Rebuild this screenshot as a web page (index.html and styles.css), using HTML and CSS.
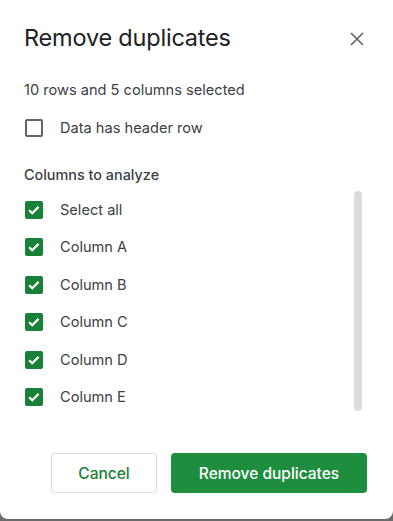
FILE: index.html
```html
<!DOCTYPE html>
<html lang="en">
<head>
  <meta charset="UTF-8" />
  <meta name="viewport" content="width=device-width, initial-scale=1.0"/>
  <title>Remove duplicates</title>
  <link rel="stylesheet" href="styles.css">
</head>
<body>

  <div class="dialog">
    <!-- HEADER -->
    <div class="dialog-head">
      <h1>Remove duplicates</h1>
      <button class="close-btn" aria-label="Close">
        <svg width="24" height="24" viewBox="0 0 24 24">
          <path d="M6 6L18 18M18 6L6 18" stroke="#5f6368" stroke-width="1.6" fill="none"/>
        </svg>
      </button>
    </div>

    <p class="summary">10 rows and 5 columns selected</p>

    <label class="row header-row">
      <span class="box"></span>
      <span>Data has header row</span>
    </label>

    <h2>Columns to analyze</h2>

    <div class="columns">
      <div class="column-list">
        <label class="row"><span class="box checked"></span><span>Select all</span></label>
        <label class="row"><span class="box checked"></span><span>Column A</span></label>
        <label class="row"><span class="box checked"></span><span>Column B</span></label>
        <label class="row"><span class="box checked"></span><span>Column C</span></label>
        <label class="row"><span class="box checked"></span><span>Column D</span></label>
        <label class="row"><span class="box checked"></span><span>Column E</span></label>
      </div>
      <div class="scroll-track"></div>
    </div>

    <!-- ACTIONS -->
    <div class="actions">
      <button class="btn btn-cancel">Cancel</button>
      <button class="btn btn-primary">Remove duplicates</button>
    </div>
  </div>

</body>
</html>
```

FILE: styles.css
```css
* {
  margin: 0; padding: 0;
  box-sizing: border-box;
  font-family: Inter, Roboto, 'Liberation Sans', sans-serif;
}

body {
  background: #6b6b6b;
  width: 393px;
  height: 521px;
  overflow: hidden;
}

.dialog {
  background: #fff;
  height: 519px;
  padding: 22px 26px 0 24px;
  border-radius: 0 0 8px 8px;
  color: #3c4043;
}

.dialog-head {
  display: flex;
  align-items: center;
  justify-content: space-between;
  height: 32px;
}

h1 {
  font-size: 23.5px;
  font-weight: 400;
  color: #202124;
  line-height: 32px;
  letter-spacing: -0.2px;
}

.close-btn {
  background: transparent;
  border: none;
  width: 24px;
  height: 24px;
  margin-right: -2px;
  margin-top: 1px;
  cursor: pointer;
}

.close-btn svg {
  display: block;
}

.summary {
  font-size: 14.6px;
  line-height: 20px;
  margin-top: 26px;
}

.row {
  display: flex;
  align-items: center;
  font-size: 14.6px;
  height: 37.5px;
  cursor: pointer;
}

.header-row {
  height: 20px;
  margin-top: 18px;
}

.box {
  width: 18px;
  height: 18px;
  margin: 0 17px 0 1px;
  border: 2px solid #5f6368;
  border-radius: 2px;
  flex-shrink: 0;
}

.box.checked {
  border: none;
  background: #188038 url("data:image/svg+xml;utf8,<svg xmlns='http://www.w3.org/2000/svg' width='18' height='18' viewBox='0 0 18 18'><path d='M4.2 9.3l3 3 6.4-6.4' stroke='white' stroke-width='2.2' fill='none'/></svg>") no-repeat center;
}

h2 {
  font-size: 14.4px;
  font-weight: 500;
  line-height: 20px;
  margin-top: 27px;
}

.columns {
  display: flex;
  margin-top: 6px;
}

.column-list {
  flex: 1;
}

.scroll-track {
  width: 8px;
  height: 220px;
  background: #dadce0;
  border-radius: 4px;
  margin-right: 5px;
}

.actions {
  display: flex;
  justify-content: flex-end;
  gap: 14px;
  margin-top: 37px;
}

.btn {
  height: 40px;
  border-radius: 4px;
  font-size: 15.5px;
  font-weight: 500;
  cursor: pointer;
}

.btn-cancel {
  width: 106px;
  background: #fff;
  color: #188038;
  border: 1px solid #dadce0;
}

.btn-primary {
  width: 196px;
  background: #1e8e3e;
  color: #fff;
  border: none;
}
```
